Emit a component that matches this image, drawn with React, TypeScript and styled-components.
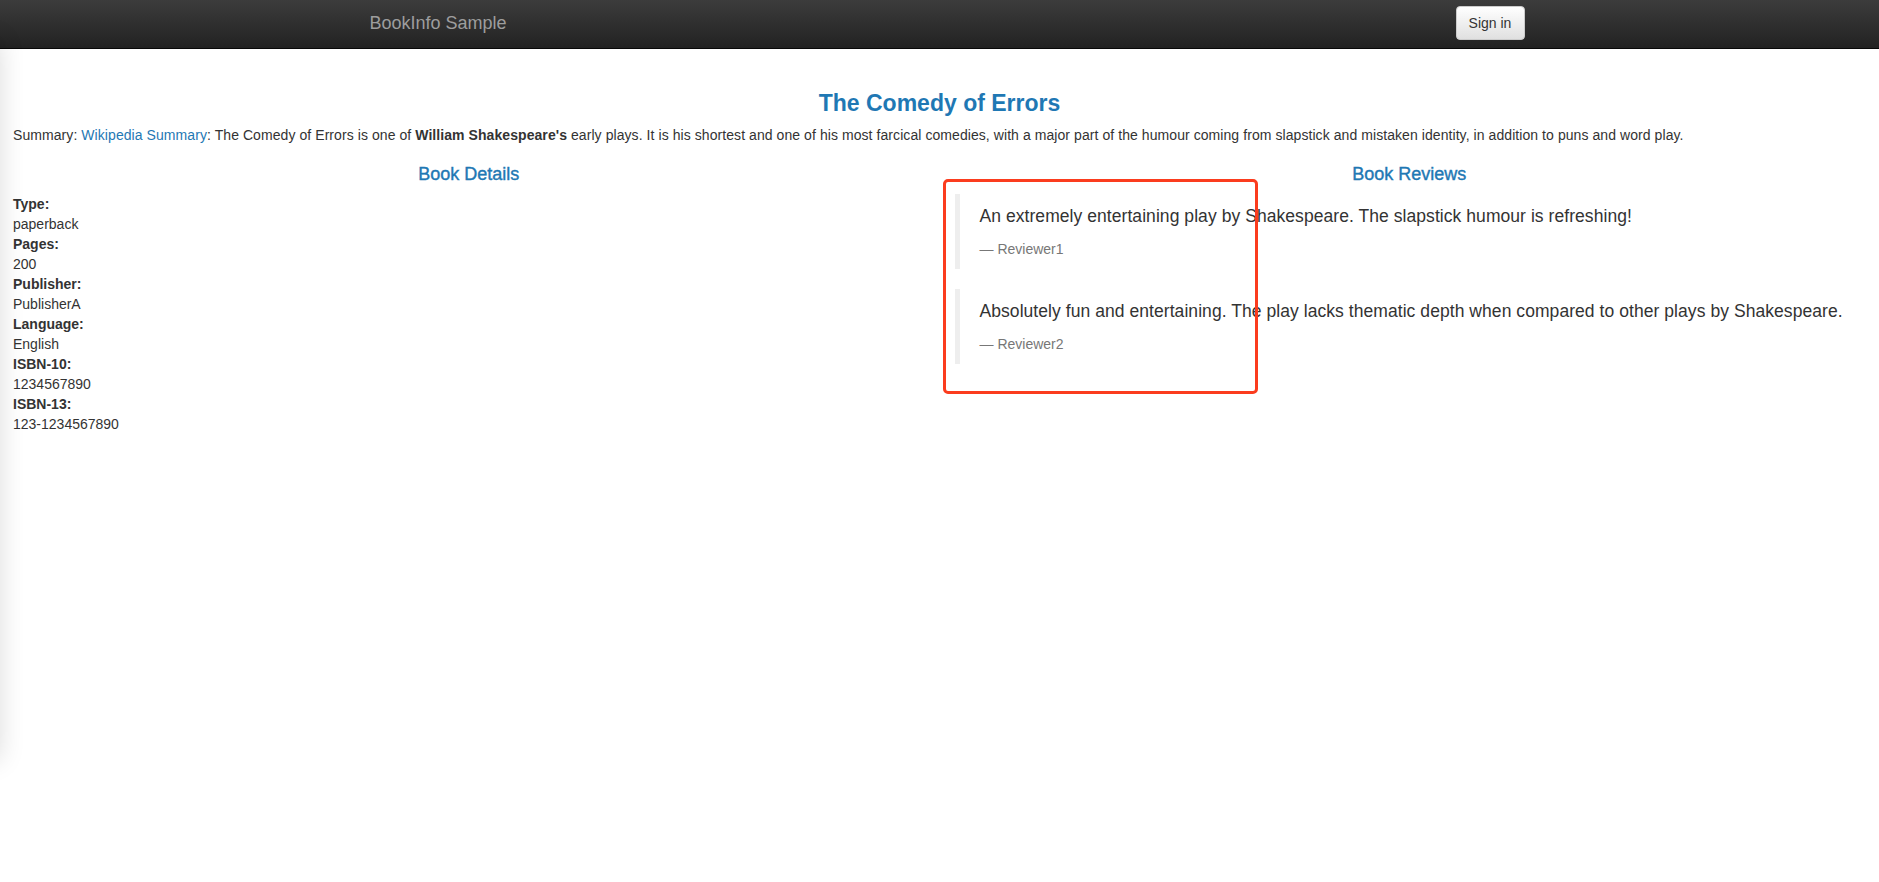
import { FC } from 'react'
import styled, { createGlobalStyle } from 'styled-components'

const GlobalStyle = createGlobalStyle`
  html, body {
    margin: 0;
    padding: 0;
    background: #fff;
  }
  body {
    font-family: 'Liberation Sans', Arial, Helvetica, sans-serif;
    font-size: 14px;
    line-height: 20px;
    color: #333;
  }
  * {
    box-sizing: border-box;
  }
`

const Page = styled.div`
  position: relative;
  min-height: 882px;
  overflow: hidden;
`

// soft shadow bleeding in from an off-screen panel on the left
const EdgeShadow = styled.div`
  position: absolute;
  left: -40px;
  top: 40px;
  width: 40px;
  height: 720px;
  box-shadow: 0 0 26px rgba(0, 0, 0, 0.14);
  pointer-events: none;
`

const Navbar = styled.nav`
  height: 49px;
  background-image: linear-gradient(to bottom, #3c3c3c 0%, #222 100%);
  border-bottom: 1px solid #080808;
`

const NavInner = styled.div`
  width: 1170px;
  height: 100%;
  margin: 0 auto;
  padding-left: 15px;
  display: flex;
  align-items: center;
  justify-content: space-between;
`

const Brand = styled.a`
  font-size: 18px;
  line-height: 20px;
  color: #9d9d9d;
  text-decoration: none;
  margin-top: -2px;
`

const SignIn = styled.button`
  font-family: inherit;
  font-size: 14px;
  line-height: 20px;
  height: 34px;
  width: 69px;
  margin-top: -2px;
  padding: 6px 12px;
  color: #333;
  background-image: linear-gradient(to bottom, #fff 0%, #e0e0e0 100%);
  border: 1px solid #ccc;
  border-radius: 4px;
  box-shadow: inset 0 1px 0 rgba(255, 255, 255, 0.15);
`

const Main = styled.main`
  padding-top: 41px;
`

const Title = styled.h3`
  margin: 0 0 9px;
  text-align: center;
  font-size: 23px;
  line-height: 26px;
  font-weight: bold;
  color: #1f78b4;
`

const Summary = styled.p`
  margin: 0;
  padding: 0 13px;
  letter-spacing: 0.07px;
`

const Link = styled.a`
  color: #1f78b4;
  text-decoration: none;
`

const Columns = styled.div`
  display: grid;
  grid-template-columns: 1fr 1fr;
  margin-top: 19px;
`

const Column = styled.section<{ $padLeft: number }>`
  padding: 0 15px 0 ${(p) => p.$padLeft}px;
`

const SectionHeading = styled.h4`
  margin: 0 0 10px;
  text-align: center;
  font-size: 18px;
  line-height: 20px;
  font-weight: normal;
  color: #1f78b4;
  -webkit-text-stroke: 0.4px #1f78b4;
`

const DetailList = styled.dl`
  margin: 0;
`

const Term = styled.dt`
  font-weight: bold;
`

const Value = styled.dd`
  margin: 0;
`

const Review = styled.blockquote`
  margin: 0 0 20px;
  padding: 10px 20px;
  border-left: 5px solid #eee;
  font-size: 17.5px;
`

const ReviewText = styled.p`
  margin: 0 0 10px;
  line-height: 25px;
  letter-spacing: 0.06px;
`

const Reviewer = styled.small`
  display: block;
  font-size: 80%;
  line-height: 20px;
  color: #777;

  &::before {
    content: '\\2014 \\00A0';
  }
`

const Highlight = styled.div`
  position: absolute;
  left: 943px;
  top: 179px;
  width: 315px;
  height: 215px;
  border: 3px solid #fb3c1e;
  border-radius: 5px;
  pointer-events: none;
`

const DETAILS = [
  { label: 'Type:', value: 'paperback' },
  { label: 'Pages:', value: '200' },
  { label: 'Publisher:', value: 'PublisherA' },
  { label: 'Language:', value: 'English' },
  { label: 'ISBN-10:', value: '1234567890' },
  { label: 'ISBN-13:', value: '123-1234567890' },
]

const REVIEWS = [
  {
    text: 'An extremely entertaining play by Shakespeare. The slapstick humour is refreshing!',
    reviewer: 'Reviewer1',
  },
  {
    text: 'Absolutely fun and entertaining. The play lacks thematic depth when compared to other plays by Shakespeare.',
    reviewer: 'Reviewer2',
  },
]

const App: FC = () => {
  return (
    <Page>
      <GlobalStyle />
      <Navbar>
        <NavInner>
          <Brand href="#">BookInfo Sample</Brand>
          <SignIn type="button">Sign in</SignIn>
        </NavInner>
      </Navbar>
      <Main>
        <Title>The Comedy of Errors</Title>
        <Summary>
          Summary: <Link href="#">Wikipedia Summary</Link>: The Comedy of Errors is one of{' '}
          <b>William Shakespeare's</b> early plays. It is his shortest and one of his most
          farcical comedies, with a major part of the humour coming from slapstick and mistaken
          identity, in addition to puns and word play.
        </Summary>
        <Columns>
          <Column $padLeft={13}>
            <SectionHeading>Book Details</SectionHeading>
            <DetailList>
              {DETAILS.map((d) => (
                <div key={d.label}>
                  <Term>{d.label}</Term>
                  <Value>{d.value}</Value>
                </div>
              ))}
            </DetailList>
          </Column>
          <Column $padLeft={15}>
            <SectionHeading>Book Reviews</SectionHeading>
            {REVIEWS.map((r) => (
              <Review key={r.reviewer}>
                <ReviewText>{r.text}</ReviewText>
                <Reviewer>{r.reviewer}</Reviewer>
              </Review>
            ))}
          </Column>
        </Columns>
      </Main>
      <EdgeShadow />
      <Highlight />
    </Page>
  )
}

export default App
